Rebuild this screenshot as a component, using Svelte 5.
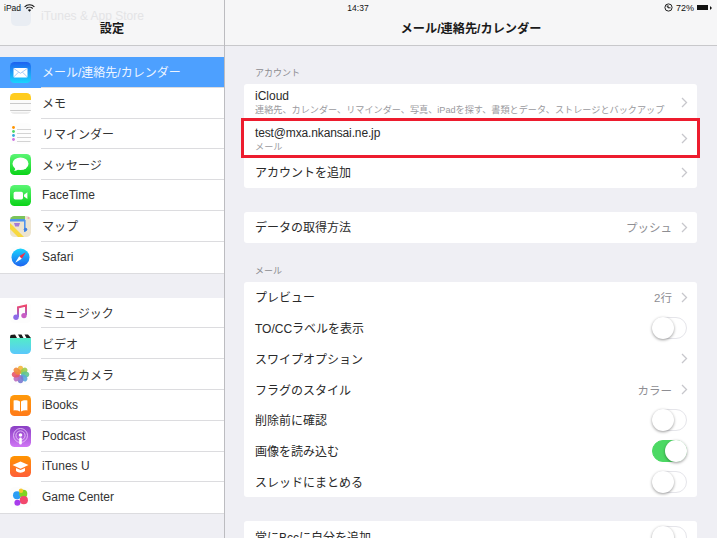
<script>
	// iPad settings screen: mail / contacts / calendar pane
	const groups = [
		[
			{ id: 'mail', label: 'メール/連絡先/カレンダー', selected: true },
			{ id: 'notes', label: 'メモ' },
			{ id: 'reminders', label: 'リマインダー' },
			{ id: 'messages', label: 'メッセージ' },
			{ id: 'facetime', label: 'FaceTime' },
			{ id: 'maps', label: 'マップ' },
			{ id: 'safari', label: 'Safari' }
		],
		[
			{ id: 'music', label: 'ミュージック' },
			{ id: 'video', label: 'ビデオ' },
			{ id: 'photos', label: '写真とカメラ' },
			{ id: 'ibooks', label: 'iBooks' },
			{ id: 'podcast', label: 'Podcast' },
			{ id: 'itunesu', label: 'iTunes U' },
			{ id: 'gamecenter', label: 'Game Center' }
		]
	];

	const mailRows = [
		{ label: 'プレビュー', value: '2行', chevron: true },
		{ label: 'TO/CCラベルを表示', toggle: false },
		{ label: 'スワイプオプション', chevron: true },
		{ label: 'フラグのスタイル', value: 'カラー', chevron: true },
		{ label: '削除前に確認', toggle: false },
		{ label: '画像を読み込む', toggle: true },
		{ label: 'スレッドにまとめる', toggle: false }
	];

	const petals = ['#f4b63c', '#9ccb4a', '#5fc48f', '#58a9dc', '#7a79d0', '#b96bc0', '#e8556a', '#ef8a3c'];
</script>

{#snippet chevron()}
	<svg class="chevron" width="7" height="11" viewBox="0 0 7 11"><path d="M1 1l4.5 4.5L1 10" fill="none" stroke="#c7c7cc" stroke-width="1.3" /></svg>
{/snippet}

{#snippet appIcon(id)}
	<svg class="icon" width="21" height="21" viewBox="0 0 21 21">
		<defs>
			<clipPath id="clip-{id}"><rect width="21" height="21" rx="4.6" /></clipPath>
			<linearGradient id="mail-g" x1="0" y1="0" x2="0" y2="1"><stop offset="0" stop-color="#1d62f0" /><stop offset="1" stop-color="#1ad5fd" /></linearGradient>
			<linearGradient id="green-g" x1="0" y1="0" x2="0" y2="1"><stop offset="0" stop-color="#5bf675" /><stop offset="1" stop-color="#0bd318" /></linearGradient>
			<linearGradient id="video-g" x1="0" y1="0" x2="0" y2="1"><stop offset="0" stop-color="#52edc7" /><stop offset="1" stop-color="#5ac8fb" /></linearGradient>
			<linearGradient id="orange-g" x1="0" y1="0" x2="0" y2="1"><stop offset="0" stop-color="#ff9500" /><stop offset="1" stop-color="#ff5e3a" /></linearGradient>
			<linearGradient id="book-g" x1="0" y1="0" x2="0" y2="1"><stop offset="0" stop-color="#ff9a0a" /><stop offset="1" stop-color="#ff7a1a" /></linearGradient>
			<linearGradient id="pod-g" x1="0" y1="0" x2="0" y2="1"><stop offset="0" stop-color="#8a3fc4" /><stop offset="1" stop-color="#d076f5" /></linearGradient>
			<linearGradient id="safari-g" x1="0" y1="0" x2="0" y2="1"><stop offset="0" stop-color="#1ad5fd" /><stop offset="1" stop-color="#1d62f0" /></linearGradient>
			<linearGradient id="music-g" x1="0" y1="0" x2="0" y2="1"><stop offset="0" stop-color="#f0476c" /><stop offset="1" stop-color="#8c6be8" /></linearGradient>
		</defs>
		<g clip-path="url(#clip-{id})">
			{#if id === 'mail'}
				<rect width="21" height="21" fill="url(#mail-g)" />
				<rect x="3.5" y="6" width="14" height="9.5" rx="1" fill="#fff" />
				<path d="M3.5 6.3l7 5 7-5M3.5 15.2l5-5M17.5 15.2l-5-5" fill="none" stroke="#7fb4f5" stroke-width=".7" />
			{:else if id === 'notes'}
				<rect width="21" height="21" fill="#fafafa" />
				<rect width="21" height="7" fill="#ffcc1f" />
				<path d="M0 10.5h21M0 17.5h21" stroke="#c9c9c9" stroke-width="1" />
				<rect y="19" width="21" height="2" fill="#ececec" />
			{:else if id === 'reminders'}
				<rect width="21" height="21" fill="#fdfdfd" />
				<circle cx="3.5" cy="4.5" r="1.4" fill="#ff9500" />
				<circle cx="3.5" cy="8.5" r="1.4" fill="#4cd964" />
				<circle cx="3.5" cy="12.5" r="1.4" fill="#34aadc" />
				<circle cx="3.5" cy="16.5" r="1.4" fill="#cc73e1" />
				<path d="M7 6.5h14M7 10.5h14M7 14.5h14M7 18.5h14" stroke="#c8c8c8" stroke-width=".8" />
			{:else if id === 'messages'}
				<rect width="21" height="21" fill="url(#green-g)" />
				<ellipse cx="10.5" cy="9.8" rx="8" ry="6.3" fill="#fff" />
				<path d="M5.5 13.5c0 1.8-.8 3-1.800 3.600 2 0 3.600-.7 4.800-2z" fill="#fff" />
			{:else if id === 'facetime'}
				<rect width="21" height="21" fill="url(#green-g)" />
				<rect x="3.6" y="6.8" width="9.4" height="7.6" rx="1.6" fill="#fff" />
				<path d="M14 9.8l3.4-2.600v6.800L14 11.400z" fill="#fff" />
			{:else if id === 'maps'}
				<rect width="21" height="21" fill="#ece4d0" />
				<rect width="15" height="3" fill="#7cc35a" />
				<rect y="3" width="15" height="2.5" fill="#4e94ee" />
				<path d="M0 13l8 8h6L0 7z" fill="#f7d83f" />
				<path d="M14.8 4v12" stroke="#4e94ee" stroke-width="1.6" />
				<path d="M4 7h6l-1.2 3.400H5.200z" fill="#a47bd8" />
				<circle cx="15.5" cy="13.5" r="1.8" fill="#3f7fe0" />
				<circle cx="18.5" cy="2" r="1" fill="#f4a6b0" />
			{:else if id === 'safari'}
				<rect width="21" height="21" fill="#fdfdfd" />
				<circle cx="10.5" cy="10.5" r="9" fill="url(#safari-g)" />
				<path d="M15.8 5.2l-6.600 4 2.600 2.600z" fill="#f0324a" />
				<path d="M5.2 15.8l6.600-4-2.600-2.600z" fill="#fff" />
			{:else if id === 'music'}
				<rect width="21" height="21" fill="#fdfdfd" />
				<path d="M8 15V5.4l8-1.800V13" fill="none" stroke="url(#music-g)" stroke-width="2" />
				<circle cx="6" cy="15.200" r="2.700" fill="#8c6be8" />
				<circle cx="14" cy="13.600" r="2.700" fill="#c85cc4" />
			{:else if id === 'video'}
				<rect y="4.500" width="21" height="16.500" fill="url(#video-g)" />
				<rect width="21" height="5" fill="#fff" />
				<path d="M0 2L5 1.500l2 3.500H0zM8 1.500h3.500l2 3.500H10zM14.500 1.500H18l3 3.500h-4.500z" fill="#1c1c1c" />
			{:else if id === 'photos'}
				<rect width="21" height="21" fill="#fdfdfd" />
				{#each petals as colour, i}
					<ellipse cx="10.5" cy="5.8" rx="2.9" ry="4" fill={colour} opacity=".9" transform="rotate({i * 45} 10.5 10.5)" />
				{/each}
			{:else if id === 'ibooks'}
				<rect width="21" height="21" fill="url(#book-g)" />
				<path d="M10 6.400C8.400 5.300 6 5 3.600 5.400v10c2.400-.3 4.600 0 6.400 1zM11 6.400c1.600-1.100 4-1.400 6.400-1v10c-2.400-.3-4.600 0-6.400 1z" fill="#fff" />
			{:else if id === 'podcast'}
				<rect width="21" height="21" fill="url(#pod-g)" />
				<circle cx="10.5" cy="9.5" r="7" fill="none" stroke="#e6c4f8" stroke-width=".9" />
				<circle cx="10.5" cy="9.5" r="4.6" fill="none" stroke="#e6c4f8" stroke-width=".9" />
				<circle cx="10.5" cy="9" r="1.8" fill="#fff" />
				<rect x="9.2" y="11.5" width="2.6" height="7" rx="1.2" fill="#fff" />
			{:else if id === 'itunesu'}
				<rect width="21" height="21" fill="url(#orange-g)" />
				<path d="M10.5 5.5l8 3.600-8 3.600-8-3.600z" fill="#fff" />
				<path d="M6 12v3c1.400 1.200 3 1.700 4.500 1.700S13.600 16.200 15 15v-3l-4.500 2z" fill="#fff" />
			{:else if id === 'gamecenter'}
				<rect width="21" height="21" fill="#fdfdfd" />
				<circle cx="7" cy="8.2" r="4" fill="#2b9df4" />
				<circle cx="13.3" cy="6.8" r="4" fill="#7fd321" />
				<circle cx="13.8" cy="13.2" r="4.1" fill="#f2476c" />
				<circle cx="7.4" cy="15.8" r="3" fill="#a83cec" />
				<circle cx="11" cy="3.8" r="2.2" fill="#f6c92e" />
			{/if}
		</g>
	</svg>
{/snippet}

{#snippet toggleSwitch(on)}
	<span class="switch" class:on><span class="knob"></span></span>
{/snippet}

<div class="screen">
	<aside class="sidebar">
		<header class="navbar">
			<div class="ghost">
				<span class="ghost-icon"></span>
				<span>iTunes &amp; App Store</span>
			</div>
			<h1>設定</h1>
		</header>
		{#each groups as group}
			<ul class="side-group">
				{#each group as item}
					<li class="side-row" class:selected={item.selected}>
						{@render appIcon(item.id)}
						<span class="side-label">{item.label}</span>
					</li>
				{/each}
			</ul>
		{/each}
	</aside>

	<main class="detail">
		<header class="navbar">
			<h1>メール/連絡先/カレンダー</h1>
		</header>

		<div class="content">
			<h2>アカウント</h2>
			<section class="card accounts">
				<div class="row tall first">
					<div class="stack">
						<span class="title">iCloud</span>
						<span class="sub">連絡先、カレンダー、リマインダー、写真、iPadを探す、書類とデータ、ストレージとバックアップ</span>
					</div>
					{@render chevron()}
				</div>
				<div class="row tall marked">
					<div class="stack">
						<span class="title">test@mxa.nkansai.ne.jp</span>
						<span class="sub">メール</span>
					</div>
					{@render chevron()}
				</div>
				<div class="row add">
					<span class="title">アカウントを追加</span>
					{@render chevron()}
				</div>
			</section>

			<section class="card single">
				<div class="row">
					<span class="title">データの取得方法</span>
					<span class="value">プッシュ</span>
					{@render chevron()}
				</div>
			</section>

			<h2 class="mail-head">メール</h2>
			<section class="card">
				{#each mailRows as row}
					<div class="row">
						<span class="title">{row.label}</span>
						{#if row.value}<span class="value">{row.value}</span>{/if}
						{#if row.chevron}{@render chevron()}{/if}
						{#if row.toggle !== undefined}{@render toggleSwitch(row.toggle)}{/if}
					</div>
				{/each}
			</section>

			<section class="card last">
				<div class="row">
					<span class="title">常にBccに自分を追加</span>
					{@render toggleSwitch(false)}
				</div>
			</section>
		</div>
	</main>

	<div class="status">
		<div class="status-left">
			<span>iPad</span>
			<svg width="11" height="8" viewBox="0 0 11 8"><path d="M.6 2.8a7 7 0 0 1 9.8 0M2.3 4.500a4.600 4.600 0 0 1 6.400 0" fill="none" stroke="#111" stroke-width="1.1" /><path d="M5.500 7.800L3.900 6a2.300 2.300 0 0 1 3.200 0z" fill="#111" /></svg>
		</div>
		<span class="status-time">14:37</span>
		<div class="status-right">
			<svg width="9" height="9" viewBox="0 0 9 9"><circle cx="4.5" cy="4.5" r="3.6" fill="none" stroke="#222" stroke-width="1" /><path d="M4 2.200v2.600h2.600M4.500 4.500L2.500 3" fill="none" stroke="#222" stroke-width="1" /></svg>
			<span class="percent">72%</span>
			<span class="battery"></span>
			<span class="battery-tip"></span>
		</div>
	</div>
</div>

<style>
	:global(body) {
		margin: 0;
	}

	.screen {
		position: relative;
		display: flex;
		width: 717px;
		height: 538px;
		overflow: hidden;
		background: #efeff4;
		color: #222;
		font-family: 'Liberation Sans', 'Noto Sans CJK JP', sans-serif;
	}

	.sidebar {
		flex: none;
		width: 224px;
		border-right: 1px solid #bcbcc0;
		display: flex;
		flex-direction: column;
	}

	.detail {
		flex: 1;
		min-width: 0;
	}

	.navbar {
		flex: none;
		position: relative;
		box-sizing: border-box;
		height: 46px;
		background: #f6f6f7;
		border-bottom: 1px solid #c8c8cb;
		overflow: hidden;
	}

	.navbar h1 {
		position: absolute;
		left: 0;
		right: 0;
		top: 21px;
		margin: 0;
		font-size: 12.2px;
		line-height: 17px;
		font-weight: 700;
		text-align: center;
		color: #1a1a1a;
	}

	.ghost {
		display: flex;
		align-items: center;
		gap: 10px;
		padding: 6px 0 0 11px;
		font-size: 12px;
		color: #e4e4e6;
	}

	.ghost-icon {
		width: 20px;
		height: 20px;
		border-radius: 5px;
		background: #e9edf3;
	}

	.side-group {
		flex: none;
		list-style: none;
		margin: 11px 0 13px;
		padding: 0;
		background: #fff;
		border-bottom: 1px solid #dcdcdf;
	}

	.side-row {
		position: relative;
		display: flex;
		align-items: center;
		gap: 11px;
		box-sizing: border-box;
		height: 30.8px;
		padding-left: 10px;
		font-size: 12px;
		color: #333;
	}

	.side-label {
		margin-top: -1px;
	}

	.side-row + .side-row::before {
		content: '';
		position: absolute;
		left: 41px;
		right: 0;
		top: -1px;
		height: 1px;
		background: #dcdcdf;
	}

	.side-row.selected {
		background: #4da0ff;
		color: #eef5ff;
	}

	.icon {
		flex: none;
	}

	.content {
		padding: 0 20px 0 19px;
	}

	h2 {
		margin: 0;
		padding: 22px 0 5px 11px;
		font-size: 9px;
		line-height: 11px;
		font-weight: 400;
		color: #8c8c90;
	}

	.mail-head {
		padding-top: 23px;
	}

	.card {
		background: #fff;
		border-radius: 3px;
	}

	.single,
	.last {
		margin-top: 24px;
	}

	.row {
		position: relative;
		display: flex;
		align-items: center;
		gap: 6px;
		box-sizing: border-box;
		height: 30.8px;
		padding: 0 10px 0 11px;
	}

	.row.tall {
		height: 36.5px;
	}

	.row.add {
		height: 31px;
	}

	.row.marked::after {
		content: '';
		position: absolute;
		left: -3px;
		right: -3px;
		top: -2.5px;
		bottom: -1px;
		border: 3px solid #ed1c2e;
		pointer-events: none;
	}

	.marked .title {
		letter-spacing: -0.14px;
	}

	.stack {
		flex: 1;
		min-width: 0;
		display: flex;
		flex-direction: column;
		padding-top: 1px;
	}

	.title {
		flex: 1;
		font-size: 12px;
		line-height: 15px;
		color: #2a2a2a;
		white-space: nowrap;
	}

	.row > .title {
		padding-top: 3px;
	}

	.row.add > .title {
		padding-top: 1px;
	}

	.sub {
		margin-top: 1px;
		font-size: 9.15px;
		line-height: 11px;
		color: #9a9a9e;
		white-space: nowrap;
	}

	.value {
		font-size: 11.5px;
		color: #8e8e93;
	}

	.chevron {
		flex: none;
		margin: 0 -1px 0 3px;
	}

	.switch {
		position: relative;
		flex: none;
		box-sizing: border-box;
		width: 35px;
		height: 22px;
		border: 1px solid #e5e5ea;
		border-radius: 11px;
		background: #fff;
	}

	.switch.on {
		background: #4cd964;
		border-color: #4cd964;
	}

	.knob {
		position: absolute;
		left: -1px;
		top: -1px;
		width: 22px;
		height: 22px;
		border-radius: 50%;
		background: #fff;
		box-shadow: 0 1px 3px rgba(0, 0, 0, 0.4);
	}

	.switch.on .knob {
		left: 12px;
	}

	.status {
		position: absolute;
		left: 0;
		right: 0;
		top: 0;
		display: grid;
		grid-template-columns: 1fr auto 1fr;
		align-items: center;
		height: 15px;
		padding: 0 5px 0 4px;
		font-size: 8.5px;
		color: #111;
	}

	.status-left {
		display: flex;
		align-items: center;
		gap: 3px;
	}

	.status-right {
		display: flex;
		align-items: center;
		justify-content: flex-end;
		gap: 3px;
	}

	.percent {
		font-size: 9px;
	}

	.battery {
		width: 11px;
		height: 5px;
		background: #111;
	}

	.battery-tip {
		width: 0;
		height: 0;
		margin-left: -1px;
		border-left: 2px solid #111;
		border-top: 2px solid transparent;
		border-bottom: 2px solid transparent;
	}
</style>
